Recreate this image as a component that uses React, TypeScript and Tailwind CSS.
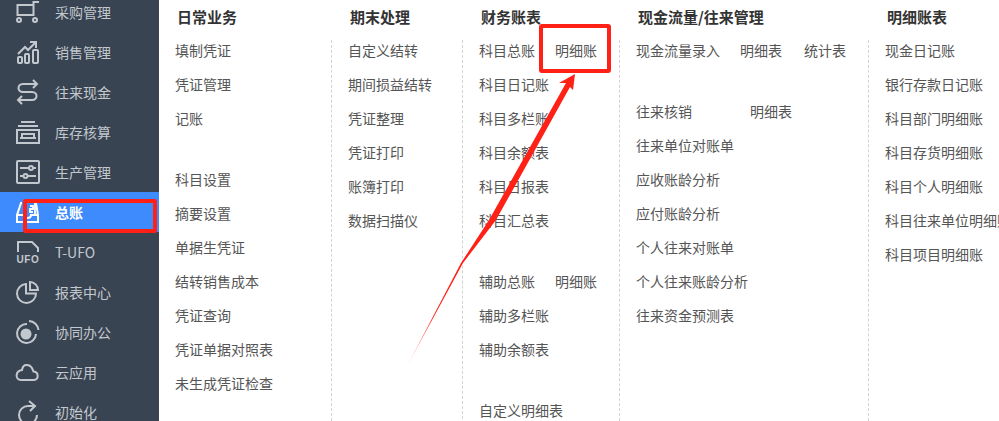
import type { ReactNode } from "react";

const Icon = ({ children }: { children: ReactNode }) => (
    <svg
        width="26"
        height="26"
        viewBox="0 0 26 26"
        fill="none"
        stroke="currentColor"
        strokeWidth="2"
        className="shrink-0"
    >
        {children}
    </svg>
);

const navItems: { label: string; active?: boolean; icon: ReactNode }[] = [
    {
        label: "采购管理",
        icon: (
            <>
                <path d="M24 3H18.500V16H2.500V6H18" />
                <circle cx="4" cy="21" r="2" />
                <circle cx="20" cy="21" r="2" />
            </>
        ),
    },
    {
        label: "销售管理",
        icon: (
            <>
                <path d="M3 15 10 8 13 11 21 3M15 3H21V9" />
                <rect x="3" y="18" width="4" height="6" rx="1" />
                <rect x="10" y="15" width="4" height="9" rx="1" />
                <rect x="18" y="11" width="5" height="13" rx="1" />
            </>
        ),
    },
    {
        label: "往来现金",
        icon: (
            <>
                <path d="M22 5H8C2 5 2 13 8 13H17C23 13 23 21 17 21H3" />
                <path d="M18 1 22 5 18 9M7 17 3 21 7 25" />
            </>
        ),
    },
    {
        label: "库存核算",
        icon: (
            <>
                <path d="M6 3H20M3 7H23" />
                <rect x="2" y="11" width="22" height="13" />
                <path d="M7 19V15H19V19M5 19H21" />
            </>
        ),
    },
    {
        label: "生产管理",
        icon: (
            <>
                <rect x="2" y="2" width="22" height="22" rx="1" />
                <path d="M5 9H14M18 9H21M5 17H8M13 17H21" />
                <circle cx="16" cy="9" r="2" />
                <circle cx="10.500" cy="17" r="2" />
            </>
        ),
    },
    {
        label: "总账",
        active: true,
        icon: (
            <>
                <path d="M7 4H6L2 16V23H23V16L21 4" />
                <path d="M2 16H9C9 20 16 20 16 16H23" />
                <path d="M12 3H20V15M15 7H18V10H15V13H18" strokeWidth="1.800" />
            </>
        ),
    },
    {
        label: "T-UFO",
        icon: (
            <>
                <path d="M3 13V3H17L23 9V13" />
                <text
                    x="13"
                    y="24"
                    textAnchor="middle"
                    fontFamily="'Liberation Sans', sans-serif"
                    fontWeight="700"
                    fontSize="10"
                    letterSpacing="0.600"
                    fill="currentColor"
                    stroke="none"
                >
                    UFO
                </text>
            </>
        ),
    },
    {
        label: "报表中心",
        icon: (
            <>
                <path d="M11 5A9.500 9.500 0 1 0 21 14.500H11Z" />
                <path d="M15 3A8 8 0 0 1 23 11H15Z" />
            </>
        ),
    },
    {
        label: "协同办公",
        icon: (
            <>
                <path d="M12 5A9.500 9.500 0 1 0 21 15" />
                <path d="M14 2A10 10 0 0 1 23.500 11" />
                <circle cx="11" cy="15" r="5.500" fill="currentColor" stroke="none" />
            </>
        ),
    },
    {
        label: "云应用",
        icon: <path d="M6 21H19C24 21 24 13 18.500 12.500 16 4 8 4 7 11 0 12 0 21 6 21Z" />,
    },
    {
        label: "初始化",
        icon: (
            <>
                <path d="M20 7H13A9 9 0 1 0 22 16" />
                <path d="M14 2 20 7 15 12" />
            </>
        ),
    },
];

type Row = { cells?: { text: string; width?: number }[]; gap?: number };

const rows = (...labels: (string | number)[]): Row[] =>
    labels.map((l) =>
        typeof l === "number" ? { gap: l } : { cells: [{ text: l }] },
    );

const columns: { title: string; width: string; rows: Row[] }[] = [
    {
        title: "日常业务",
        width: "w-[172px]",
        rows: rows(
            "填制凭证",
            "凭证管理",
            "记账",
            27,
            "科目设置",
            "摘要设置",
            "单据生凭证",
            "结转销售成本",
            "凭证查询",
            "凭证单据对照表",
            "未生成凭证检查",
        ),
    },
    {
        title: "期末处理",
        width: "w-[131px]",
        rows: rows(
            "自定义结转",
            "期间损益结转",
            "凭证整理",
            "凭证打印",
            "账簿打印",
            "数据扫描仪",
        ),
    },
    {
        title: "财务账表",
        width: "w-[157px]",
        rows: [
            { cells: [{ text: "科目总账", width: 76 }, { text: "明细账" }] },
            ...rows("科目日记账", "科目多栏账", "科目余额表", "科目日报表", "科目汇总表", 27),
            { cells: [{ text: "辅助总账", width: 76 }, { text: "明细账" }] },
            ...rows("辅助多栏账", "辅助余额表", 27, "自定义明细表"),
        ],
    },
    {
        title: "现金流量/往来管理",
        width: "w-[249px]",
        rows: [
            {
                cells: [
                    { text: "现金流量录入", width: 104 },
                    { text: "明细表", width: 64 },
                    { text: "统计表" },
                ],
            },
            { gap: 27 },
            { cells: [{ text: "往来核销", width: 114 }, { text: "明细表" }] },
            ...rows(
                "往来单位对账单",
                "应收账龄分析",
                "应付账龄分析",
                "个人往来对账单",
                "个人往来账龄分析",
                "往来资金预测表",
            ),
        ],
    },
    {
        title: "明细账表",
        width: "flex-1",
        rows: rows(
            "现金日记账",
            "银行存款日记账",
            "科目部门明细账",
            "科目存货明细账",
            "科目个人明细账",
            "科目往来单位明细账",
            "科目项目明细账",
        ),
    },
];

export default function App() {
    return (
        <div className="relative flex h-[421px] w-[999px] overflow-hidden bg-white font-['Noto_Sans_CJK_SC','Liberation_Sans',sans-serif] text-[14px]">
            <aside className="w-[159px] shrink-0 bg-[#394452]">
                <ul className="-mt-[8px]">
                    {navItems.map((item) => (
                        <li
                            key={item.label}
                            className={`flex h-[40px] items-center gap-[14px] pl-[15px] ${
                                item.active
                                    ? "bg-[#3d8bfd] font-bold text-white"
                                    : "text-[#c3c8ce]"
                            }`}
                        >
                            <Icon>{item.icon}</Icon>
                            <span>{item.label}</span>
                        </li>
                    ))}
                </ul>
            </aside>

            <main className="flex min-w-0 flex-1 overflow-hidden">
                {columns.map((col, i) => (
                    <section key={col.title} className={`flex h-[421px] shrink-0 flex-col overflow-hidden ${col.width}`}>
                        <h3
                            className={`flex h-[34px] shrink-0 items-center text-[15px] font-bold text-[#333] ${
                                i > 0 ? "pl-[19px]" : "pl-[18px]"
                            }`}
                        >
                            {col.title}
                        </h3>
                        <div
                            className={`mt-[6px] flex-1 border-dashed border-[#d2d2d2] pl-[16px] text-[#555] ${
                                i > 0 ? "border-l" : ""
                            }`}
                        >
                            {col.rows.map((row, r) =>
                                row.cells ? (
                                    <div key={r} className="flex h-[34px] whitespace-nowrap leading-[20px]">
                                        {row.cells.map((cell) => (
                                            <span
                                                key={cell.text}
                                                style={cell.width ? { width: cell.width } : undefined}
                                            >
                                                {cell.text}
                                            </span>
                                        ))}
                                    </div>
                                ) : (
                                    <div key={r} style={{ height: row.gap }} />
                                ),
                            )}
                        </div>
                    </section>
                ))}
            </main>

            {/* annotations drawn over the screenshot */}
            <div className="absolute left-[23px] top-[199px] h-[34px] w-[134px] rounded-[2px] border-[4px] border-[#ff2016]" />
            <div className="absolute left-[539px] top-[24px] h-[49px] w-[72px] rounded-[3px] border-[4px] border-[#ff2016]" />
            <svg className="absolute left-0 top-0" width="999" height="421" fill="none">
                <defs>
                    <linearGradient id="arrowFade" x1="405" y1="370" x2="435" y2="318" gradientUnits="userSpaceOnUse">
                        <stop offset="0" stopColor="#ff2016" stopOpacity="0.1" />
                        <stop offset="1" stopColor="#ff2016" />
                    </linearGradient>
                </defs>
                <polygon
                    points="405,370 463,263 496,220 570,87 573,90 575,74 559,83 566,83 489,220 461,263"
                    fill="url(#arrowFade)"
                />
            </svg>
        </div>
    );
}
